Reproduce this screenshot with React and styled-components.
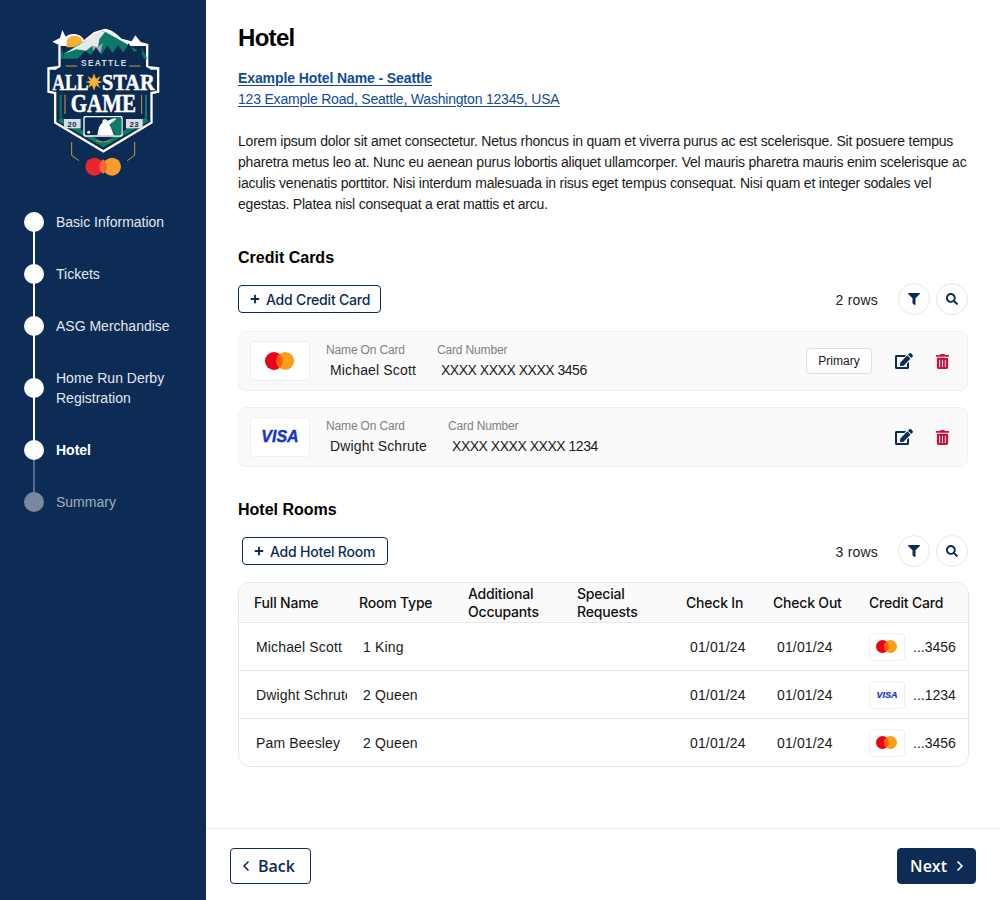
import React from 'react';
import styled, { createGlobalStyle } from 'styled-components';
import { FaEdit, FaFilter, FaSearch, FaTrashAlt, FaPlus } from 'react-icons/fa';
import { ChevronLeft, ChevronRight } from 'lucide-react';

const NAVY = '#0c2c56';
const MEDIUM = 'Inter, "Liberation Sans", sans-serif';

const GlobalStyle = createGlobalStyle`
  * { box-sizing: border-box; }
  body {
    margin: 0;
    background: #fff;
    color: #111;
    font-family: "Liberation Sans", Arial, sans-serif;
  }
`;

const Page = styled.div`
  display: flex;
  height: 900px;
`;

const Sidebar = styled.aside`
  flex: 0 0 206px;
  background: ${NAVY};
  padding: 10px 0 0 0;
`;

const LogoWrap = styled.div`
  display: block;
  margin-left: 20px;
  height: 180px;
`;

const Steps = styled.ol`
  list-style: none;
  margin: 22px 0 0;
  padding: 0 16px 0 24px;
  display: flex;
  flex-direction: column;
  gap: 32px;
`;

const Step = styled.li`
  position: relative;
  display: flex;
  align-items: center;
  gap: 12px;
  font-size: 14px;
  line-height: 20px;
  color: ${p => (p.$state === 'off' ? '#a3aebd' : p.$state === 'current' ? '#fff' : '#e4e8ed')};
  font-weight: ${p => (p.$state === 'current' ? 700 : 400)};

  &::before {
    content: ${p => (p.$first ? 'none' : "''")};
    position: absolute;
    left: 9px;
    width: 2px;
    top: -16px;
    height: calc(50% + 16px);
    background: ${p => (p.$state === 'off' ? '#55698a' : '#fff')};
  }
  &::after {
    content: ${p => (p.$state === 'off' ? 'none' : "''")};
    position: absolute;
    left: 9px;
    width: 2px;
    top: 50%;
    bottom: -16px;
    background: ${p => (p.$state === 'current' ? '#55698a' : '#fff')};
  }
`;

const Dot = styled.span`
  position: relative;
  z-index: 1;
  flex: 0 0 20px;
  height: 20px;
  border-radius: 50%;
  background: ${p => (p.$off ? '#7a889e' : '#fff')};
`;

const Main = styled.main`
  flex: 1;
  min-width: 0;
  display: flex;
  flex-direction: column;
`;

const Content = styled.div`
  flex: 1;
  padding: 24px 32px 0;
`;

const Title = styled.h1`
  margin: 0;
  font-size: 24px;
  line-height: 28px;
  font-weight: 700;
  letter-spacing: -0.7px;
  color: #000;
`;

const Address = styled.div`
  margin-top: 16px;
  font-size: 14px;
  line-height: 21px;
`;

const HotelLink = styled.a`
  display: block;
  color: #134a9a;
  text-decoration: underline;
  text-underline-offset: 2px;
  font-weight: ${p => (p.$bold ? 700 : 400)};
  letter-spacing: ${p => (p.$bold ? -0.1 : -0.2)}px;
`;

const Blurb = styled.p`
  margin: 21px 0 0;
  font-size: 14px;
  line-height: 21px;
  letter-spacing: -0.22px;
  color: #1a1a1a;
`;

const SectionTitle = styled.h2`
  margin: 33px 0 0;
  font-size: 16px;
  line-height: 20px;
  font-weight: 700;
  color: #000;
`;

const Toolbar = styled.div`
  display: flex;
  align-items: center;
  justify-content: space-between;
  height: 32px;
  margin-top: 15px;
`;

const AddButton = styled.button`
  display: inline-flex;
  align-items: center;
  gap: 6px;
  height: 28px;
  padding: 0 ${p => (p.$indent ? 12 : 10)}px 0 11px;
  margin-left: ${p => p.$indent || 0}px;
  background: #fff;
  border: 1px solid ${NAVY};
  border-radius: 4px;
  color: ${NAVY};
  font: 500 14px ${MEDIUM};
  letter-spacing: -0.2px;
`;

const ToolbarRight = styled.div`
  display: flex;
  align-items: center;
  font-size: 14px;
  color: #222;
`;

const RowCount = styled.span`
  margin-right: 20px;
  padding-top: 1px;
  letter-spacing: 0.2px;
`;

const RoundButton = styled.button`
  display: flex;
  align-items: center;
  justify-content: center;
  width: 32px;
  height: 32px;
  margin-left: ${p => (p.$second ? 6 : 0)}px;
  padding: 0;
  background: #fff;
  border: 1px solid #e8e8e8;
  border-radius: 50%;
  color: ${NAVY};
  font-size: 12px;
`;

const CardList = styled.div`
  display: flex;
  flex-direction: column;
  gap: 16px;
  margin-top: 16px;
`;

const CardRow = styled.div`
  display: flex;
  align-items: center;
  height: 60px;
  padding: 0 16px 0 11px;
  background: #fafafa;
  border: 1px solid #efefef;
  border-radius: 8px;
`;

const LogoBox = styled.div`
  display: flex;
  align-items: center;
  justify-content: center;
  flex: none;
  width: ${p => (p.$small ? 36 : 60)}px;
  height: ${p => (p.$small ? 28 : 40)}px;
  background: #fff;
  border: 1px solid #efefef;
  border-radius: 4px;
`;

const VisaMark = styled.span`
  font: italic 700 ${p => (p.$small ? 9 : 16)}px "Liberation Sans", sans-serif;
  color: #1434cb;
  -webkit-text-stroke: ${p => (p.$small ? 0.2 : 0.4)}px #1434cb;
`;

const Field = styled.div`
  margin-left: ${p => p.$gap}px;
`;

const FieldLabel = styled.div`
  font-size: 12px;
  line-height: 16px;
  letter-spacing: -0.15px;
  color: #808080;
`;

const FieldValue = styled.div`
  margin: 2px 0 0 4px;
  font-size: 14px;
  line-height: 20px;
  color: #1a1a1a;
  letter-spacing: ${p => (p.$masked ? -0.48 : 0.15)}px;
`;

const RowActions = styled.div`
  margin-left: auto;
  display: flex;
  align-items: center;
`;

const PrimaryTag = styled.span`
  display: flex;
  align-items: center;
  justify-content: center;
  width: 66px;
  height: 26px;
  margin-right: 23px;
  background: #fff;
  border: 1px solid #dedede;
  border-radius: 4px;
  font-size: 12px;
  color: #1a1a1a;
`;

const ActionIcon = styled.span`
  display: flex;
  width: 18px;
  margin-left: ${p => (p.$danger ? 20 : 0)}px;
  justify-content: center;
  font-size: ${p => (p.$danger ? 15 : 18)}px;
  color: ${p => (p.$danger ? '#c8103e' : NAVY)};
`;

const Table = styled.div`
  width: 731px;
  margin-top: 15px;
  border: 1px solid #e8e8e8;
  border-radius: 12px;
  overflow: hidden;
`;

const columns = '105px 109px 109px 109px 87px 96px 1fr';

const HeadRow = styled.div`
  display: grid;
  grid-template-columns: ${columns};
  align-items: center;
  height: 39px;
  padding-left: 15px;
  background: #fafafa;
  font: 500 14px/18px ${MEDIUM};
  letter-spacing: -0.2px;
  color: #111;
`;

const BodyRow = styled.div`
  display: grid;
  grid-template-columns: ${columns};
  align-items: center;
  height: 48px;
  padding-left: 15px;
  border-top: 1px solid #e8e8e8;
  font-size: 14px;
  color: #1a1a1a;
`;

const Cell = styled.div`
  padding-left: 4px;
  overflow: hidden;
  white-space: nowrap;
  letter-spacing: 0.15px;
`;

const NameCell = styled(Cell)`
  padding-left: 2px;
  width: 93px;
`;

const CardCell = styled.div`
  display: flex;
  align-items: center;
  gap: 8px;
`;

const Footer = styled.footer`
  display: flex;
  justify-content: space-between;
  align-items: flex-start;
  height: 72px;
  padding: 19px 24px 0;
  border-top: 1px solid #ececec;
`;

const NavButton = styled.button`
  display: inline-flex;
  align-items: center;
  justify-content: ${p => (p.$solid ? 'flex-end' : 'flex-start')};
  gap: ${p => (p.$solid ? 5 : 4)}px;
  width: ${p => p.$w}px;
  height: 36px;
  padding: 0 7px;
  border: 1px solid ${NAVY};
  border-radius: 4px;
  background: ${p => (p.$solid ? NAVY : '#fff')};
  color: ${p => (p.$solid ? '#fff' : NAVY)};
  font: 600 16px "Open Sans", sans-serif;
`;

const Mastercard = ({ size = 15 }) => {
  const r = size;
  const gap = r * 0.62;
  const h = Math.sqrt(r * r - gap * gap);
  return (
    <svg width={(r + gap) * 2} height={r * 2} viewBox={`${-r - gap} ${-r} ${(r + gap) * 2} ${r * 2}`}>
      <circle cx={-gap} cy="0" r={r} fill="#eb001b" />
      <circle cx={gap} cy="0" r={r} fill="#f79e1b" />
      <path d={`M0 ${-h} A${r} ${r} 0 0 1 0 ${h} A${r} ${r} 0 0 1 0 ${-h}Z`} fill="#ff5f00" />
    </svg>
  );
};

// event crest, coordinates are the 3x crop of the logo
const Crest = () => (
  <svg width="170" height="180" viewBox="0 0 510 540">
    {/* white outline */}
    <path d="M97 95 L120 84 L127 60 L137 80 L146 74 C165 68 185 74 192 90 L222 66 L255 56 C275 58 290 72 305 86 L335 94 L346 76 L362 96 L385 102 L385 168 L418 172 L418 248 L398 252 L398 340 L250 428 L102 340 L102 252 L82 248 L82 172 L115 168 L115 104 Z" fill="#fff" />
    {/* shield body */}
    <path d="M122 108 L378 108 L378 170 L391 178 L391 336 L250 420 L109 336 L109 178 L122 170 Z" fill="#0b2a52" />
    {/* sun and mountain */}
    <path d="M140 92 A27 27 0 0 1 188 92 L176 112 L140 112 Z" fill="#f4b133" />
    <path d="M132 130 L205 86 L250 62 L300 90 L345 116 L372 130 L372 150 L132 150 Z" fill="#0b7a66" />
    <path d="M136 130 L190 96 L228 68 L258 62 L238 88 L234 112 L216 108 L198 122 L170 118 Z" fill="#e4e8ea" />
    <path d="M216 108 L234 112 L248 98 L242 128 L222 130 Z" fill="#a3adb1" />
    {/* tree line */}
    <path d="M172 146 L196 122 L212 136 L228 112 L244 134 L262 106 L278 130 L294 104 L310 128 L326 100 L342 126 L360 116 L372 146 L372 176 L128 176 L128 146 Z" fill="#0b2a52" />
    <path d="M132 146 L126 112 L122 146 Z M372 146 L364 112 L382 146 Z" fill="#0b7a66" />
    <path d="M137 168 H172 M328 168 H362" stroke="#c79a3c" strokeWidth="3" />
    <text x="183" y="169" fill="#d8dde3" fontFamily="Liberation Sans, sans-serif" fontWeight="700" fontSize="25" textLength="136">SEATTLE</text>
    {/* wordmark band */}
    <path d="M89 179 H411 V242 L391 246 H109 L89 242 Z" fill="#0b2a52" />
    <text x="97" y="240" fill="#fff" stroke="#fff" strokeWidth="1.5" fontFamily="Liberation Serif, serif" fontWeight="700" fontSize="70" textLength="108" lengthAdjust="spacingAndGlyphs">ALL</text>
    <path d="M222 190 L228 206 L242 198 L234 212 L248 216 L234 220 L240 234 L228 226 L222 242 L216 226 L204 234 L210 220 L196 216 L210 212 L202 198 L216 206 Z" fill="#f4b133" />
    <text x="246" y="240" fill="#fff" stroke="#fff" strokeWidth="1.5" fontFamily="Liberation Serif, serif" fontWeight="700" fontSize="70" textLength="158" lengthAdjust="spacingAndGlyphs">STAR</text>
    <text x="152" y="306" fill="#fff" stroke="#fff" strokeWidth="1.5" fontFamily="Liberation Serif, serif" fontWeight="700" fontSize="74" textLength="196" lengthAdjust="spacingAndGlyphs">GAME</text>
    {/* side stripes */}
    <path d="M135 254 V312 M365 254 V312" stroke="#c79a3c" strokeWidth="3" />
    <path d="M122 254 V322 M378 254 V322" stroke="#0b7a66" strokeWidth="6" />
    {/* green chevron at the foot */}
    <path d="M122 322 L250 398 L378 322 L386 334 L250 412 L114 334 Z" fill="#0b7a66" />
    <path d="M228 392 Q250 400 272 392" stroke="#c79a3c" strokeWidth="3" fill="none" />
    {/* year plates and batter */}
    <rect x="132" y="327" width="50" height="28" fill="#d8dde3" />
    <rect x="318" y="327" width="50" height="28" fill="#d8dde3" />
    <text x="157" y="350" textAnchor="middle" fill="#0b2a52" fontFamily="Liberation Sans, sans-serif" fontWeight="700" fontSize="23" letterSpacing="2">20</text>
    <text x="343" y="350" textAnchor="middle" fill="#0b2a52" fontFamily="Liberation Sans, sans-serif" fontWeight="700" fontSize="23" letterSpacing="2">23</text>
    <rect x="190" y="318" width="118" height="62" rx="6" fill="#fff" />
    <rect x="194" y="322" width="110" height="54" rx="4" fill="#0b2a52" />
    <path d="M272 322 H298 Q304 322 304 328 V370 Q304 376 298 376 H286 L270 350 Z" fill="#0b7a66" />
    <path d="M232 376 C236 356 236 346 248 338 C244 328 256 324 262 332 L286 324 L288 328 L268 344 C274 354 278 366 282 376 Z" fill="#fff" />
    <circle cx="206" cy="367" r="4.5" fill="#fff" />
    {/* brackets and sponsor mark */}
    <path d="M155 396 V436 L177 452 M344 396 V436 L322 452" stroke="#c79a3c" strokeWidth="3" fill="none" />
    <circle cx="223" cy="470" r="27" fill="#e92530" />
    <circle cx="276" cy="470" r="27" fill="#f79d2e" />
    <path d="M249.5 448 A27 27 0 0 1 249.5 492 A27 27 0 0 1 249.5 448 Z" fill="#ef6a36" />
  </svg>
);

const steps = [
  { label: 'Basic Information' },
  { label: 'Tickets' },
  { label: 'ASG Merchandise' },
  { label: <>Home Run Derby<br />Registration</> },
  { label: 'Hotel', state: 'current' },
  { label: 'Summary', state: 'off' },
];

const savedCards = [
  { brand: 'mc', name: 'Michael Scott', number: 'XXXX XXXX XXXX 3456', primary: true },
  { brand: 'visa', name: 'Dwight Schrute', number: 'XXXX XXXX XXXX 1234' },
];

const rooms = [
  { name: 'Michael Scott', type: '1 King', brand: 'mc', last: '...3456' },
  { name: 'Dwight Schrute', type: '2 Queen', brand: 'visa', last: '...1234' },
  { name: 'Pam Beesley', type: '2 Queen', brand: 'mc', last: '...3456' },
];

const ListTools = ({ count }) => (
  <ToolbarRight>
    <RowCount>{count} rows</RowCount>
    <RoundButton><FaFilter /></RoundButton>
    <RoundButton $second><FaSearch /></RoundButton>
  </ToolbarRight>
);

export default function App() {
  return (
    <Page>
      <GlobalStyle />
      <Sidebar>
        <LogoWrap><Crest /></LogoWrap>
        <Steps>
          {steps.map((s, i) => (
            <Step key={i} $state={s.state} $first={i === 0}>
              <Dot $off={s.state === 'off'} />
              <span>{s.label}</span>
            </Step>
          ))}
        </Steps>
      </Sidebar>
      <Main>
        <Content>
          <Title>Hotel</Title>
          <Address>
            <HotelLink $bold href="#">Example Hotel Name - Seattle</HotelLink>
            <HotelLink href="#">123 Example Road, Seattle, Washington 12345, USA</HotelLink>
          </Address>
          <Blurb>
            Lorem ipsum dolor sit amet consectetur. Netus rhoncus in quam et viverra purus ac est scelerisque. Sit posuere tempus pharetra metus leo at. Nunc eu aenean purus lobortis aliquet ullamcorper. Vel mauris pharetra mauris enim scelerisque ac iaculis venenatis porttitor. Nisi interdum malesuada in risus eget tempus consequat. Nisi quam et integer sodales vel egestas. Platea nisl consequat a erat mattis et arcu.
          </Blurb>

          <SectionTitle>Credit Cards</SectionTitle>
          <Toolbar>
            <AddButton><FaPlus size={10} />Add Credit Card</AddButton>
            <ListTools count={2} />
          </Toolbar>
          <CardList>
            {savedCards.map(card => (
              <CardRow key={card.name}>
                <LogoBox>
                  {card.brand === 'mc' ? <Mastercard size={9} /> : <VisaMark>VISA</VisaMark>}
                </LogoBox>
                <Field $gap={16}>
                  <FieldLabel>Name On Card</FieldLabel>
                  <FieldValue>{card.name}</FieldValue>
                </Field>
                <Field $gap={21}>
                  <FieldLabel>Card Number</FieldLabel>
                  <FieldValue $masked>{card.number}</FieldValue>
                </Field>
                <RowActions>
                  {card.primary && <PrimaryTag>Primary</PrimaryTag>}
                  <ActionIcon><FaEdit /></ActionIcon>
                  <ActionIcon $danger><FaTrashAlt /></ActionIcon>
                </RowActions>
              </CardRow>
            ))}
          </CardList>

          <SectionTitle>Hotel Rooms</SectionTitle>
          <Toolbar>
            <AddButton $indent={4}><FaPlus size={10} />Add Hotel Room</AddButton>
            <ListTools count={3} />
          </Toolbar>
          <Table>
            <HeadRow>
              <div>Full Name</div>
              <div>Room Type</div>
              <div>Additional<br />Occupants</div>
              <div>Special<br />Requests</div>
              <div>Check In</div>
              <div>Check Out</div>
              <div>Credit Card</div>
            </HeadRow>
            {rooms.map(room => (
              <BodyRow key={room.name}>
                <NameCell>{room.name}</NameCell>
                <Cell>{room.type}</Cell>
                <Cell />
                <Cell />
                <Cell>01/01/24</Cell>
                <Cell>01/01/24</Cell>
                <CardCell>
                  <LogoBox $small>
                    {room.brand === 'mc' ? <Mastercard size={6.5} /> : <VisaMark $small>VISA</VisaMark>}
                  </LogoBox>
                  {room.last}
                </CardCell>
              </BodyRow>
            ))}
          </Table>
        </Content>
        <Footer>
          <NavButton $w={81}><ChevronLeft size={16} strokeWidth={2.5} />Back</NavButton>
          <NavButton $w={79} $solid>Next<ChevronRight size={16} strokeWidth={2.5} /></NavButton>
        </Footer>
      </Main>
    </Page>
  );
}
